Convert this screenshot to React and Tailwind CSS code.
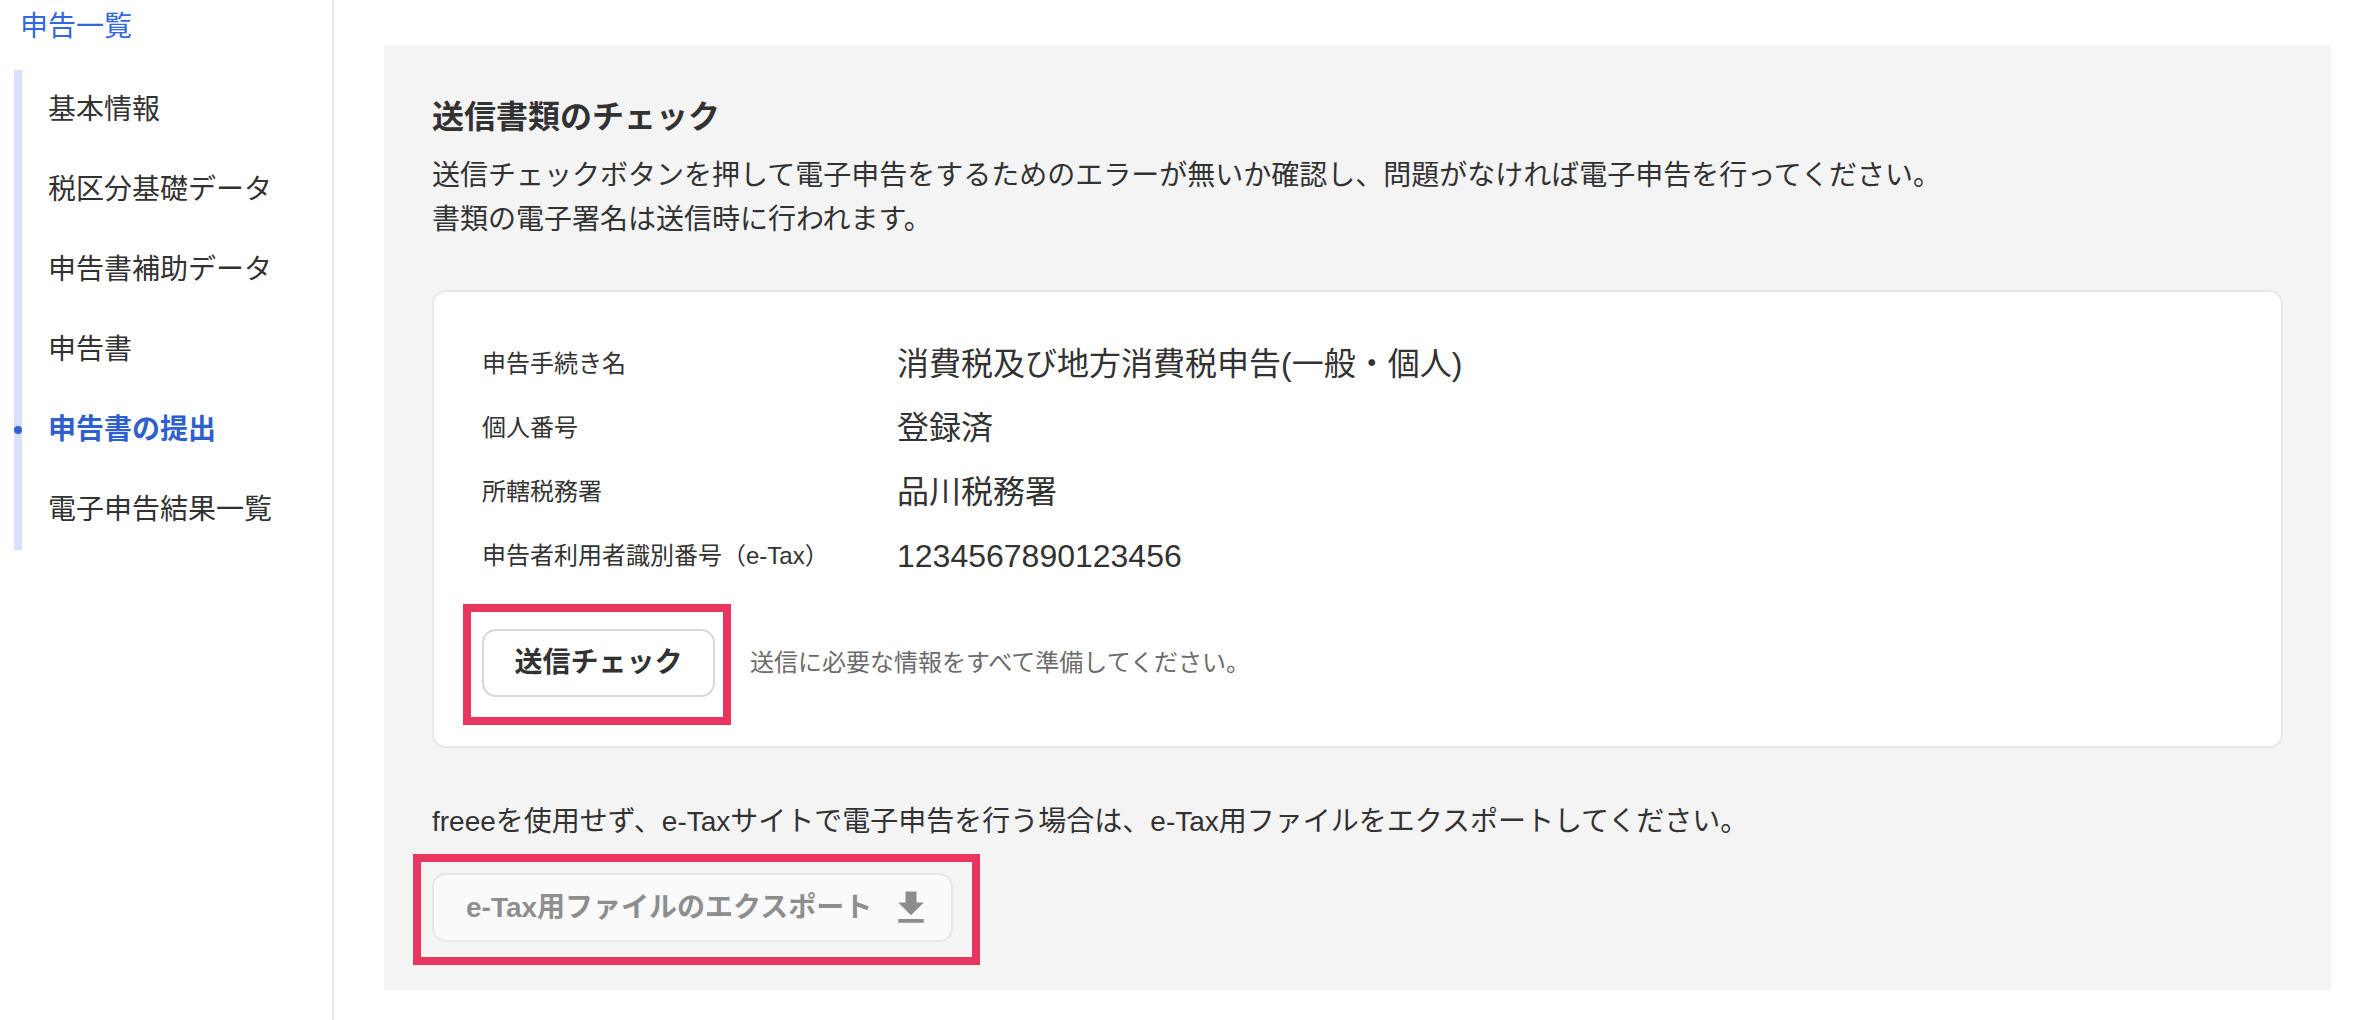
import React from 'react';

const FONT = { fontFamily: '"Liberation Sans", "Noto Sans CJK JP", sans-serif' };

const navItems = [
    { label: '基本情報' },
    { label: '税区分基礎データ' },
    { label: '申告書補助データ' },
    { label: '申告書' },
    { label: '申告書の提出', active: true },
    { label: '電子申告結果一覧' },
];

const rows = [
    { label: '申告手続き名', value: '消費税及び地方消費税申告(一般・個人)' },
    { label: '個人番号', value: '登録済' },
    { label: '所轄税務署', value: '品川税務署' },
    { label: '申告者利用者識別番号（e-Tax）', value: '1234567890123456' },
];

const Sidebar = () => (
    <aside className="w-[334px] shrink-0 border-r-2 border-[#e8e8e8] bg-white">
        <div className="pl-[20px] pt-[7px] text-[28px] leading-[40px] text-[#3268de]">申告一覧</div>
        <div className="mt-[23px] ml-[14px] w-[8px] bg-[#d7e2fa] relative">
            <ul className="w-[300px]">
                {navItems.map((item) => (
                    <li key={item.label} className="relative h-20 flex items-center pl-[34px]">
                        {item.active && (
                            <span className="absolute left-0 top-1/2 -translate-y-1/2 w-[8px] h-[8px] rounded-full bg-[#2f60d6]" />
                        )}
                        <span
                            className={
                                item.active
                                    ? 'text-[28px] font-bold text-[#2f5fce]'
                                    : 'text-[28px] text-[#323232]'
                            }
                        >
                            {item.label}
                        </span>
                    </li>
                ))}
            </ul>
        </div>
    </aside>
);

const DownloadIcon = () => (
    <svg width="44" height="44" viewBox="0 0 24 24" fill="#8c8c8c">
        <path d="M19 9h-4V3H9v6H5l7 7 7-7zM5 18v2h14v-2H5z" />
    </svg>
);

const App = () => {
    return (
        <div className="flex min-h-[1020px] bg-white text-[#323232]" style={FONT}>
            <Sidebar />
            <main className="flex-1 pl-[50px] pr-[29px] pt-[45px]">
                <section className="bg-[#f5f4f5] p-12">
                    <h2 className="text-[32px] leading-[48px] font-bold text-[#323232]">送信書類のチェック</h2>
                    <p className="mt-[13px] text-[28px] leading-[44px] text-[#323232]">
                        送信チェックボタンを押して電子申告をするためのエラーが無いか確認し、問題がなければ電子申告を行ってください。
                        <br />
                        書類の電子署名は送信時に行われます。
                    </p>

                    {/* submission info card */}
                    <div className="mt-12 bg-white border-2 border-[#e9e8e9] rounded-[14px] pt-10 pb-[49px] px-12">
                        <div className="grid grid-cols-[415px_1fr]">
                            {rows.map((row) => (
                                <React.Fragment key={row.label}>
                                    <div className="h-16 flex items-center text-[24px] text-[#323232]">{row.label}</div>
                                    <div className="h-16 flex items-center text-[32px] text-[#323232]">{row.value}</div>
                                </React.Fragment>
                            ))}
                        </div>
                        <div className="mt-[41px] flex items-center">
                            <div className="relative">
                                <button className="w-[233px] h-[68px] bg-white border-2 border-[#d8d8d8] rounded-[14px] text-[28px] font-bold text-[#323232]">
                                    送信チェック
                                </button>
                                <div className="absolute -left-[19px] -right-[16px] -top-[25px] -bottom-[28px] border-8 border-[#e8365e] pointer-events-none" />
                            </div>
                            <span className="ml-[35px] text-[24px] text-[#6b6b6b]">送信に必要な情報をすべて準備してください。</span>
                        </div>
                    </div>

                    <p className="mt-[53px] text-[28px] leading-[42px] text-[#323232]">
                        freeeを使用せず、e-Taxサイトで電子申告を行う場合は、e-Tax用ファイルをエクスポートしてください。
                    </p>
                    <div className="mt-[30px] relative w-[521px]">
                        <button
                            disabled
                            className="w-[521px] h-[69px] flex items-center justify-between pl-[32px] pr-[18px] bg-[#fafafa] border-2 border-[#e6e6e6] rounded-[14px] text-[28px] font-bold text-[#8e8e8e]"
                        >
                            <span>e-Tax用ファイルのエクスポート</span>
                            <DownloadIcon />
                        </button>
                        <div className="absolute -left-[19px] -right-[27px] -top-[19px] -bottom-[23px] border-8 border-[#e8365e] pointer-events-none" />
                    </div>
                </section>
            </main>
        </div>
    );
};

export default App;
